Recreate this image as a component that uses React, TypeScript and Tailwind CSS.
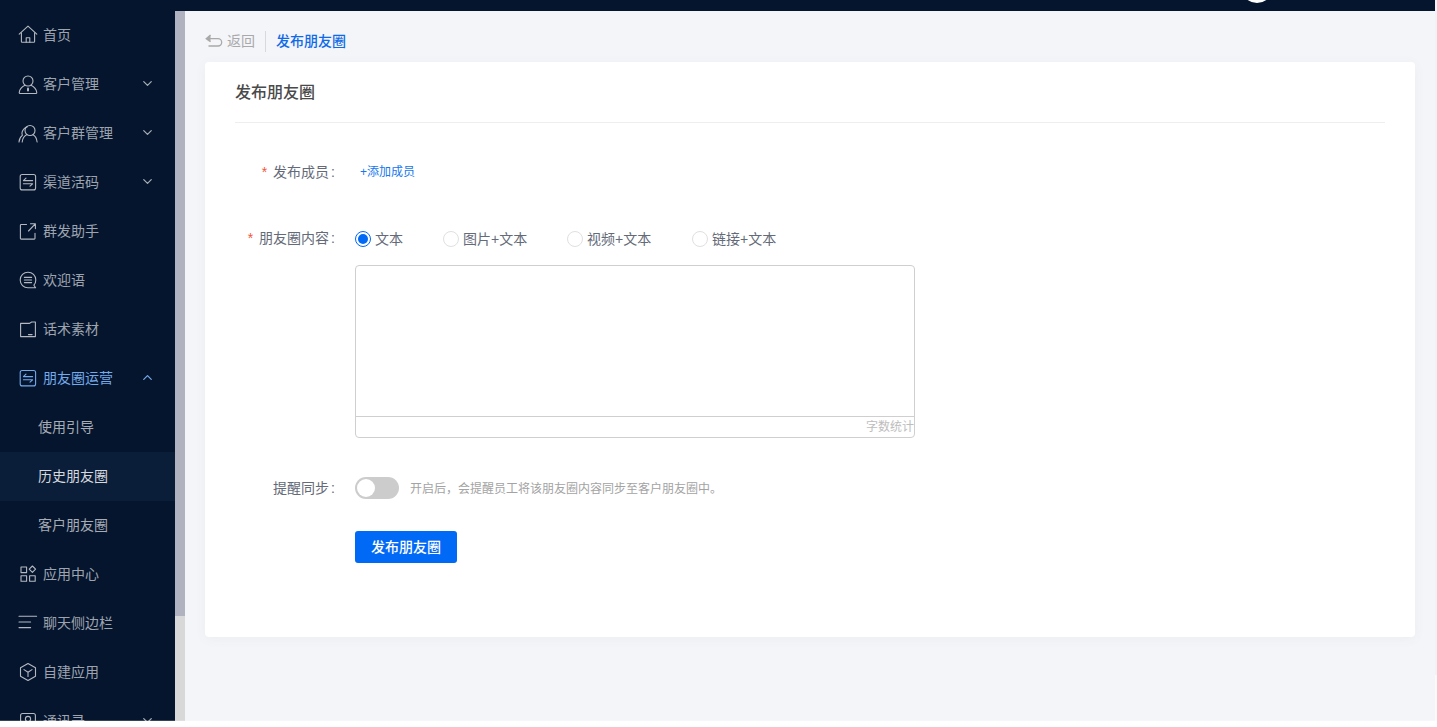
import React from "react";
import { ChevronDown, ChevronUp } from "lucide-react";

const FONT = "font-['Liberation_Sans','Noto_Sans_CJK_SC',sans-serif]";

const S = { fill: "none", stroke: "currentColor", strokeWidth: 1.1, strokeLinecap: "round" as const, strokeLinejoin: "round" as const };

const Home = () => (
  <svg width="20" height="20" viewBox="0 0 20 20" {...S}>
    <path d="M1.2 9.2 10 1.2l8.8 8" />
    <path d="M3.4 7.8v8.7a.8.8 0 0 0 .8.8h11.6a.8.8 0 0 0 .8-.8V7.8" />
    <path d="M8.2 17.2v-4.5h3.6v4.5" />
  </svg>
);
const Person = () => (
  <svg width="20" height="20" viewBox="0 0 20 20" {...S}>
    <circle cx="10" cy="7" r="5" />
    <path d="M7 11.2C4 12.6 1.6 15 1.2 18.5a1 1 0 0 0 1 1h15.6a1 1 0 0 0 1-1C18.4 15 16 12.6 13 11.2" />
    <path d="M10 14.6v2" strokeWidth="2" />
  </svg>
);
const Group = () => (
  <svg width="20" height="20" viewBox="0 0 20 20" {...S}>
    <circle cx="12" cy="7.5" r="5" />
    <path d="M4.2 19c.3-3.5 2.2-6.2 4.7-7.5" />
    <path d="M1 19c.2-3 1.5-5.2 3.4-6.6-.7-1.8-.4-4.6 1.6-6.6 1-1 2.2-1.7 3.4-2" />
    <path d="M15 11.8c2.4 1.2 3.7 3.8 4.1 7.2" />
  </svg>
);
const Swap = () => (
  <svg width="20" height="20" viewBox="0 0 20 20" {...S}>
    <rect x="2.2" y="2.5" width="15.4" height="15.4" rx="2" />
    <path d="M14.6 8.6H5.4l2.6-2.4" />
    <path d="M5.4 11.8h9.2L12 14.2" />
  </svg>
);
const Share = () => (
  <svg width="20" height="20" viewBox="0 0 20 20" {...S}>
    <path d="M8.5 3.5H3.2a.8.8 0 0 0-.8.8v13a.8.8 0 0 0 .8.8h13a.8.8 0 0 0 .8-.8v-5" />
    <path d="M10.5 10 17 3.2M12.5 2.8H17.4v4.8" />
  </svg>
);
const Chat = () => (
  <svg width="20" height="20" viewBox="0 0 20 20" {...S}>
    <path d="M17.6 17.8H10a7.8 7.8 0 1 1 7.8-7.8c0 2-.7 3.8-1.9 5.2z" />
    <path d="M6.4 7.4h7.2M6.4 10h7.2M6.4 12.6h7.2" />
  </svg>
);
const Folder = () => (
  <svg width="20" height="20" viewBox="0 0 20 20" {...S}>
    <path d="M2.6 4.4h9l2-1.4h3.8v14.6H2.6z" />
    <path d="M10.6 15.6h3.4" strokeWidth="1.4" />
  </svg>
);
const Apps = () => (
  <svg width="20" height="20" viewBox="0 0 20 20" {...S}>
    <rect x="3" y="3" width="5.6" height="5.6" />
    <rect x="3" y="11.7" width="5.6" height="5.6" />
    <rect x="11.6" y="11.7" width="5.6" height="5.6" />
    <path d="M14.4 2l3.2 3.2-3.2 3.2-3.2-3.2z" />
  </svg>
);
const Lines = () => (
  <svg width="20" height="20" viewBox="0 0 20 20" {...S}>
    <path d="M1 3.2h17.6M1 9h11.6M1 14.6h11.6" />
  </svg>
);
const Cube = () => (
  <svg width="20" height="20" viewBox="0 0 20 20" {...S}>
    <path d="M10 1.5l7.5 4.3v8.4L10 18.5l-7.5-4.3V5.8z" />
    <path d="M6 7.6l4 2.7 4-2.7M10 10.3v4.2" />
  </svg>
);
const Contacts = () => (
  <svg width="20" height="20" viewBox="0 0 20 20" {...S}>
    <rect x="2.6" y="2.5" width="14.8" height="15" rx="2" />
    <circle cx="10" cy="8" r="2.6" />
  </svg>
);
const Back = () => (
  <svg width="18" height="14" viewBox="0 0 18 14" fill="none" stroke="#a9a9a9" strokeWidth="1.3">
    <path d="M5.5 1 1.2 4.6l4.3 3.2" fill="#a9a9a9" />
    <path d="M2 4.6h11a3.7 3.7 0 0 1 0 7.4H3.5" />
  </svg>
);

type Item = { label: string; icon: React.ReactNode; arrow?: "down" | "up"; tone?: "active" };
const top: Item[] = [
  { label: "首页", icon: <Home /> },
  { label: "客户管理", icon: <Person />, arrow: "down" },
  { label: "客户群管理", icon: <Group />, arrow: "down" },
  { label: "渠道活码", icon: <Swap />, arrow: "down" },
  { label: "群发助手", icon: <Share /> },
  { label: "欢迎语", icon: <Chat /> },
  { label: "话术素材", icon: <Folder /> },
  { label: "朋友圈运营", icon: <Swap />, arrow: "up", tone: "active" },
];
const bottom: Item[] = [
  { label: "应用中心", icon: <Apps /> },
  { label: "聊天侧边栏", icon: <Lines /> },
  { label: "自建应用", icon: <Cube /> },
  { label: "通讯录", icon: <Contacts />, arrow: "down" },
];

function MenuRow({ item }: { item: Item }) {
  const active = item.tone === "active";
  return (
    <div className={`flex h-[49px] shrink-0 items-center pl-[18px] pr-[20px] text-sm ${active ? "text-[#74a9ea]" : "text-[#9ea4ae]"}`}>
      <span className={`flex h-5 w-5 shrink-0 items-center justify-center ${active ? "text-[#74a9ea]" : "text-[#b4b9c1]"}`}>{item.icon}</span>
      <span className="ml-[5px] flex-1 whitespace-nowrap">{item.label}</span>
      {item.arrow === "down" && <ChevronDown size={15} strokeWidth={2} className="text-[#a8adb5]" />}
      {item.arrow === "up" && <ChevronUp size={15} strokeWidth={2} className="text-[#74a9ea]" />}
    </div>
  );
}

function Radio({ label, checked, className }: { label: string; checked?: boolean; className: string }) {
  return (
    <div className={`flex items-center ${className}`}>
      {checked ? (
        <span className="flex h-4 w-4 items-center justify-center rounded-full border border-[#0069f6] bg-white">
          <span className="h-[10px] w-[10px] rounded-full bg-[#0069f6]" />
        </span>
      ) : (
        <span className="h-4 w-4 rounded-full border border-[#e0e0e0] bg-white" />
      )}
      <span className="ml-1 whitespace-nowrap text-sm text-[#646a78]">{label}</span>
    </div>
  );
}

function Label({ required, children, className }: { required?: boolean; children: React.ReactNode; className?: string }) {
  return (
    <div className={`flex w-[150px] shrink-0 justify-end whitespace-nowrap pr-[20px] text-sm text-[#646a78] ${className ?? ""}`}>
      {required && <span className="mr-[6px] text-[#f0573c]">*</span>}
      <span>{children}</span>
      <span className="ml-[2px]">:</span>
    </div>
  );
}

export default function App() {
  return (
    <div className={`relative flex h-[727px] w-[1437px] overflow-hidden bg-white ${FONT}`}>
      <div className="flex h-[721px] min-w-0 flex-1 flex-col overflow-hidden">
        <div className="relative h-[11px] shrink-0 overflow-hidden bg-[#05152e]">
          <span className="absolute left-[1241px] top-[-29px] h-[32px] w-[32px] rounded-full bg-white" />
        </div>
        <div className="flex min-h-0 flex-1">
          <aside className="flex w-[175px] shrink-0 flex-col overflow-hidden bg-[#05152e]">
            <div className="-mt-[1px] flex flex-col">
              {top.map((it) => (
                <MenuRow key={it.label} item={it} />
              ))}
              <div className="flex h-[50px] shrink-0 items-center pb-[1px] pl-[38px] text-sm text-[#a6abb4]">使用引导</div>
              <div className="flex h-[49px] shrink-0 items-center bg-[#0a1d39] pb-[1px] pl-[38px] text-sm text-[#d5d8dd]">历史朋友圈</div>
              <div className="flex h-[48px] shrink-0 items-center pl-[38px] text-sm text-[#a6abb4]">客户朋友圈</div>
              {bottom.map((it) => (
                <MenuRow key={it.label} item={it} />
              ))}
            </div>
          </aside>
          <div className="flex w-[10px] shrink-0 flex-col bg-[#d8d8d8]">
            <div className="h-[605px] bg-[#b1b2bf]" />
          </div>
          <main className="flex min-w-0 flex-1 flex-col bg-[#f4f5f9] pl-[20px] pr-[20px]">
            <div className="flex h-[51px] shrink-0 items-center pt-[9px]">
              <Back />
              <span className="ml-[4px] text-sm text-[#a9a9a9]">返回</span>
              <span className="ml-[10px] h-[21px] w-px bg-[#d9d9d9]" />
              <span className="ml-[10px] text-sm font-medium text-[#0f6ae8]">发布朋友圈</span>
            </div>
            <section className="flex h-[575px] flex-col rounded-[4px] bg-white px-[30px] shadow-[0_2px_12px_rgba(100,101,102,0.05)]">
              <h1 className="flex h-[61px] shrink-0 items-center border-b border-[#eeeeee] pt-[2px] text-base font-medium text-[#4a4a4a]">发布朋友圈</h1>
              <div className="-ml-[30px] mt-[37px] flex h-[24px] items-center">
                <Label required>发布成员</Label>
                <span className="ml-[5px] text-xs text-[#1677ee]">+添加成员</span>
              </div>
              <div className="-ml-[30px] mt-[43px] flex">
                <Label required className="pt-[1px]">朋友圈内容</Label>
                <div className="flex flex-col">
                  <div className="flex h-[22px] items-center pt-[2px]">
                    <Radio label="文本" checked className="w-[88px]" />
                    <Radio label="图片+文本" className="w-[124px]" />
                    <Radio label="视频+文本" className="w-[125px]" />
                    <Radio label="链接+文本" className="w-[100px]" />
                  </div>
                  <div className="mt-[16px] flex h-[173px] w-[560px] flex-col rounded-[4px] border border-[#cfcfcf]">
                    <div className="flex-1 border-b border-[#cfcfcf]" />
                    <div className="flex h-[20px] items-center justify-end text-xs text-[#bdbdbd]">字数统计</div>
                  </div>
                </div>
              </div>
              <div className="-ml-[30px] mt-[39px] flex h-[22px] items-center">
                <Label>提醒同步</Label>
                <span className="flex h-[22px] w-[44px] items-center rounded-full bg-[#cccccc] pl-[2px]">
                  <span className="h-[18px] w-[18px] rounded-full bg-white" />
                </span>
                <span className="ml-[11px] pt-[1px] text-xs text-[#a3a3a3]">开启后，会提醒员工将该朋友圈内容同步至客户朋友圈中。</span>
              </div>
              <div className="-ml-[30px] mt-[32px] pl-[150px]">
                <button className="h-[32px] w-[102px] rounded-[3px] bg-[#0069f6] text-sm font-medium text-white">发布朋友圈</button>
              </div>
            </section>
          </main>
        </div>
      </div>
      <div className="flex h-[721px] w-[2px] shrink-0 flex-col bg-[#fafafa]">
        <div className="h-[675px] bg-[#f1f2f5]" />
      </div>
      <div className="absolute bottom-[6px] left-0 h-px w-full bg-white/20" />
    </div>
  );
}
